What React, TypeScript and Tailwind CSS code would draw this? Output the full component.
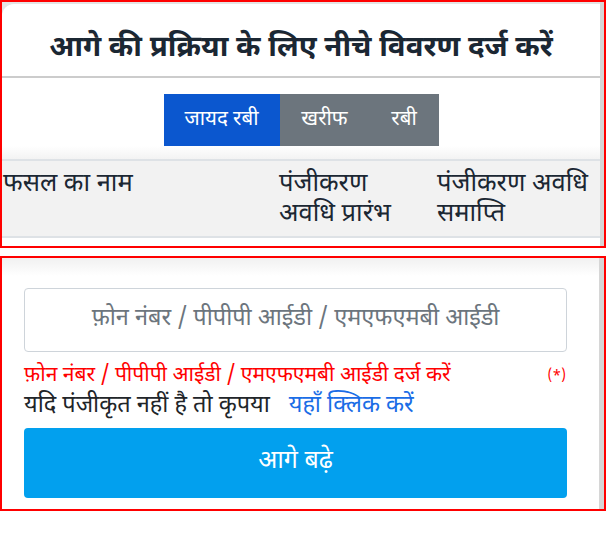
import React from "react";

export default function App() {
  return (
    <div className="w-[606px] h-[534px] bg-white overflow-hidden font-['Noto_Sans_Devanagari','Nirmala_UI','Noto_Sans',sans-serif]">
      {/* Top box */}
      <div className="relative h-[248px] border-2 border-[#ff0000] bg-[#e4e4e4] overflow-hidden">
        <div className="absolute right-0 top-0 bottom-0 w-[4px] bg-[#d6d6d6]" />
        <div className="mt-[2px] mr-[4px] h-[260px] bg-white rounded-tl-[12px] flex flex-col">
          <div className="h-[74px] shrink-0 flex items-center justify-center border-b-2 border-[#cccccc]">
            <h1 className="text-[29.5px] font-bold text-[#1b2733] leading-none pt-[20px]">
              आगे की प्रक्रिया के लिए नीचे विवरण दर्ज करें
            </h1>
          </div>
          <div className="flex justify-center pt-[16px] shrink-0">
            <div className="flex h-[52px] text-[20.5px] text-white">
              <div className="w-[116px] bg-[#0b57cf] flex items-center justify-center">जायद रबी</div>
              <div className="w-[90px] bg-[#6c757d] flex items-center justify-center">खरीफ</div>
              <div className="w-[69px] bg-[#6c757d] flex items-center justify-center">रबी</div>
            </div>
          </div>
          <div className="h-[13px] shrink-0 bg-gradient-to-b from-white to-[#f3f3f3]" />
          <div className="bg-[#f2f2f2] border-y-2 border-[#dee2e6] h-[79px] shrink-0 flex text-[25.5px] leading-[30px] text-[#1b2733] pt-[9px]">
            <div className="w-[277px] pl-[1px]">फसल का नाम</div>
            <div className="w-[158px]">पंजीकरण<br />अवधि प्रारंभ</div>
            <div className="flex-1">पंजीकरण अवधि<br />समाप्ति</div>
          </div>
          <div className="h-[20px] bg-white" />
        </div>
      </div>

      <div className="h-[8px]" />

      {/* Bottom box */}
      <div className="relative h-[255px] border-2 border-[#ff0000] bg-white overflow-hidden">
        <div className="absolute right-0 top-0 bottom-0 w-[5px] bg-[#d6d6d6]" />
        <div className="h-[18px] bg-gradient-to-b from-[#f1f1f1] to-white mr-[5px]" />
        <div className="ml-[22px] w-[543px] pt-[12px]">
          <div className="h-[64px] border border-[#ced4da] rounded-[4px] flex items-center justify-center text-[23.5px] text-[#6c757d]">
            फ़ोन नंबर / पीपीपी आईडी / एमएफएमबी आईडी
          </div>
          <div className="flex justify-between items-center text-[21px] text-[#ff0000] h-[41px] pt-[8px] leading-none">
            <span>फ़ोन नंबर / पीपीपी आईडी / एमएफएमबी आईडी दर्ज करें</span>
            <span className="text-[14px] pr-[1px]">(*)</span>
          </div>
          <div className="flex items-center h-[28px] text-[23.5px] text-[#212529] leading-none">
            <span>यदि पंजीकृत नहीं है तो कृपया</span>
            <span className="ml-[19px] text-[#1a6de6]">यहाँ क्लिक करें</span>
          </div>
          <div className="mt-[7px] h-[70px] bg-[#02a0ee] rounded-[4px] flex items-center justify-center text-white text-[25px]">
            आगे बढ़े
          </div>
        </div>
      </div>
    </div>
  );
}
